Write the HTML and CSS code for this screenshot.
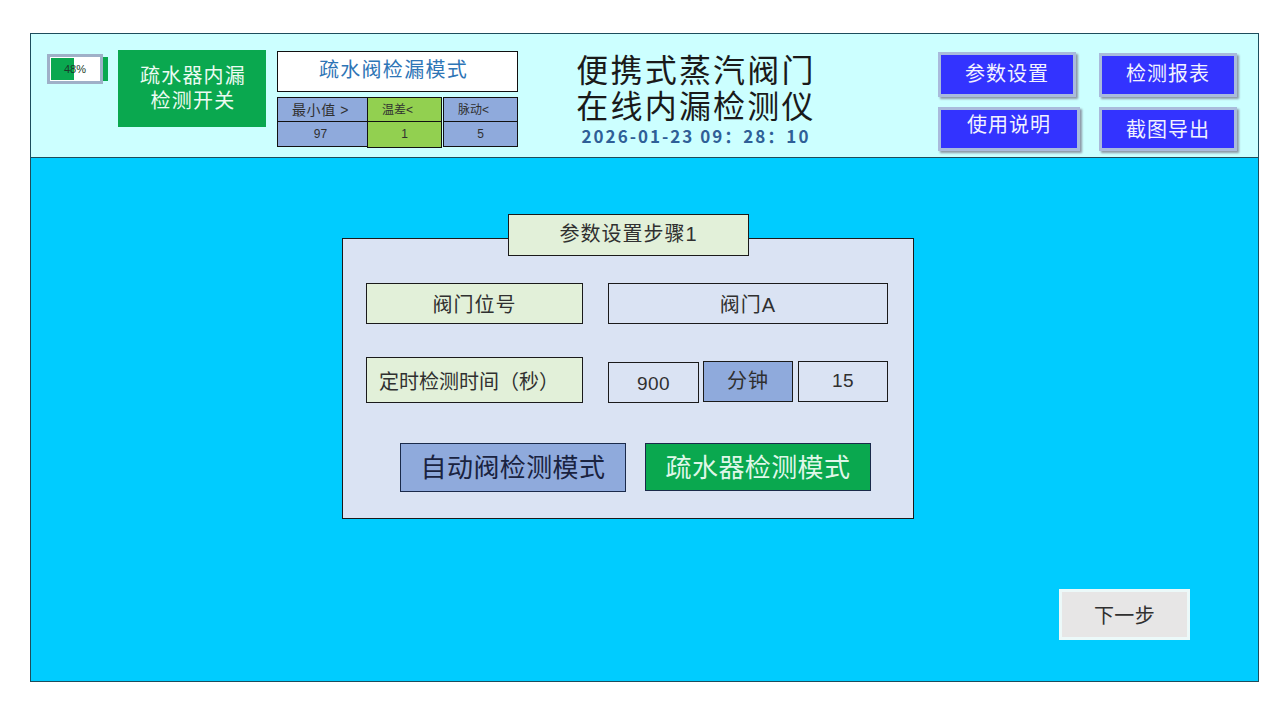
FILE: index.html
```html
<!DOCTYPE html>
<html lang="zh-CN">
<head>
<meta charset="utf-8">
<title>便携式蒸汽阀门在线内漏检测仪</title>
<link rel="stylesheet" href="styles.css">
</head>
<body>
<main class="frame">
  <header class="head">
    <div class="battery">
      <div class="battery-shell">
        <div class="battery-fill" style="width:48%"></div>
        <span class="battery-text">48%</span>
      </div>
      <div class="battery-tip"></div>
    </div>
    <div class="switch">疏水器内漏<br>检测开关</div>
    <div class="mode">
      <div class="mode-name">疏水阀检漏模式</div>
      <div class="limits">
        <div class="limit limit-min"><div class="cell cell-top">最小值 &gt;</div><div class="cell">97</div></div>
        <div class="limit limit-temp"><div class="cell cell-top">温差&lt;</div><div class="cell">1</div></div>
        <div class="limit limit-pulse"><div class="cell cell-top">脉动&lt;</div><div class="cell">5</div></div>
      </div>
    </div>
    <div class="title">
      <h1 class="title-text">便携式蒸汽阀门<br>在线内漏检测仪</h1>
      <div class="clock">2026-01-23 09：28：10</div>
    </div>
    <div class="actions">
      <div class="action action-a">参数设置</div>
      <div class="action action-b">检测报表</div>
      <div class="action action-c">使用说明</div>
      <div class="action action-d">截图导出</div>
    </div>
  </header>
  <section class="content">
    <div class="panel">
      <div class="panel-title">参数设置步骤1</div>
      <div class="row row-one">
        <div class="label">阀门位号</div>
        <div class="value value-wide">阀门A</div>
      </div>
      <div class="row row-two">
        <div class="label label-tall">定时检测时间（秒）</div>
        <div class="timer">
          <div class="value value-sec">900</div>
          <div class="value value-unit">分钟</div>
          <div class="value value-min">15</div>
        </div>
      </div>
      <div class="modes">
        <div class="mode-btn mode-auto">自动阀检测模式</div>
        <div class="mode-btn mode-trap">疏水器检测模式</div>
      </div>
    </div>
    <div class="footer">
      <div class="next">下一步</div>
    </div>
  </section>
</main>
</body>
</html>
```
FILE: styles.css
```css
* { box-sizing: border-box; }
html, body { margin: 0; height: 720px; background: #fff; overflow: hidden; }
body {
  padding: 33px 21px 0 30px;
  font-family: "Liberation Sans", "Noto Sans CJK SC", sans-serif;
  color: #303030;
}
.frame {
  width: 1229px;
  height: 649px;
  border: 1px solid #1d4d5c;
  display: flex;
  flex-direction: column;
}
.head {
  height: 124px;
  flex: none;
  background: #ccffff;
  border-bottom: 1px solid #1d4d5c;
  display: flex;
  align-items: flex-start;
}
.battery { display: flex; align-items: center; margin: 20px 0 0 16px; width: 71px; }
.battery-shell {
  position: relative;
  width: 56px;
  height: 30px;
  border: 3px solid #9fb0c8;
  background: #fff;
  padding: 1px;
}
.battery-fill { height: 100%; background: #0aa84f; }
.battery-text {
  position: absolute;
  inset: 0;
  display: flex;
  align-items: center;
  justify-content: center;
  font-size: 11px;
  color: #1a3a2a;
}
.battery-tip { width: 5px; height: 24px; background: #0aa84f; }
.switch {
  width: 148px;
  height: 77px;
  margin: 16px 0 0 0;
  padding: 14px 0 0 2px;
  background: #0aa84f;
  color: #ecfbf2;
  text-align: center;
  font-size: 20px;
  line-height: 25px;
  letter-spacing: 1.2px;
}
.mode { width: 241px; margin: 17px 0 0 11px; }
.mode-name {
  height: 41px;
  padding-right: 8px;
  background: #fff;
  border: 1px solid #111;
  color: #2e75b6;
  font-size: 20px;
  line-height: 36px;
  text-align: center;
  letter-spacing: 1.3px;
}
.limits { display: flex; margin-top: 5px; align-items: flex-start; }
.limit { font-size: 12px; text-align: center; background: #8faadc; }
.limit-min { width: 90px; }
.limit-temp { width: 75px; background: #92d050; }
.limit-pulse { width: 75px; margin-left: 1px; }
.cell {
  height: 26px;
  margin-top: -1px;
  border: 1px solid #111;
  line-height: 24px;
}
.cell-top { height: 25px; margin-top: 0; line-height: 24px; }
.limit-min .cell-top { font-size: 14px; letter-spacing: 0.6px; padding-right: 4px; white-space: nowrap; }
.limit-temp .cell-top, .limit-pulse .cell-top { padding-right: 14px; }
.limit-min .cell { border-right: none; }
.limit-min .cell:last-child { height: 26px; padding-right: 4px; }
.limit-pulse .cell:last-child { height: 26px; }
.limit-temp .cell:last-child { height: 27px; }
.title { width: 240px; margin: 19px 0 0 58px; text-align: center; }
.title-text {
  margin: 0;
  font-size: 32px;
  font-weight: 400;
  line-height: 36px;
  letter-spacing: 2.2px;
  color: #1a1a1a;
  white-space: nowrap;
}
.clock {
  margin-top: 0;
  font-size: 17px;
  line-height: 22px;
  font-weight: 700;
  letter-spacing: 2px;
  color: #2f5f97;
  font-family: "Noto Sans CJK SC", sans-serif;
  white-space: nowrap;
}
.actions {
  margin: 18px 0 0 122px;
  width: 300px;
  display: grid;
  grid-template-columns: 142px 138px;
  grid-template-rows: 45px 44px;
  column-gap: 19px;
  row-gap: 10px;
}
.action {
  background: #3333ff;
  color: #f2f2ff;
  border: 3px solid #a9bbdc;
  box-shadow: 2px 2px 2px #8d9aa8;
  font-size: 20px;
  letter-spacing: 1px;
  display: flex;
  align-items: center;
  justify-content: center;
}
.action-a { width: 138px; padding-bottom: 4px; }
.action-b { margin-top: 1px; height: 44px; padding-bottom: 6px; }
.action-c { padding-bottom: 12px; }
.action-d { padding-bottom: 1px; }
.content {
  flex: 1;
  background: #00ccff;
  padding: 80px 0 0 311px;
}
.panel {
  position: relative;
  width: 572px;
  height: 281px;
  background: #dae3f3;
  border: 1px solid #1a1a1a;
  padding: 44px 0 0 23px;
}
.panel-title {
  position: absolute;
  left: 165px;
  top: -25px;
  width: 241px;
  height: 42px;
  background: #e2f0d9;
  border: 1px solid #1a1a1a;
  font-size: 20px;
  line-height: 38px;
  text-align: center;
  letter-spacing: 1px;
}
.row { display: flex; align-items: flex-start; }
.row-two { margin-top: 33px; }
.label {
  width: 217px;
  height: 41px;
  background: #e2f0d9;
  border: 1px solid #1a1a1a;
  font-size: 20px;
  line-height: 42px;
  text-align: center;
  letter-spacing: 1px;
}
.label-tall {
  height: 46px;
  line-height: 48px;
  text-align: left;
  padding-left: 12px;
  letter-spacing: 0;
  white-space: nowrap;
}
.value {
  height: 41px;
  border: 1px solid #1a1a1a;
  background: #dae3f3;
  font-size: 20px;
  line-height: 42px;
  text-align: center;
}
.value-wide { width: 280px; margin-left: 25px; letter-spacing: 1px; }
.timer { display: flex; width: 280px; margin: 4px 0 0 25px; align-items: flex-start; }
.value-sec { width: 91px; margin-top: 1px; font-size: 19px; letter-spacing: 0.5px; }
.value-unit { width: 90px; margin-left: 4px; background: #8faadc; letter-spacing: 1px; line-height: 38px; }
.value-min { width: 90px; margin-left: 5px; font-size: 19px; line-height: 38px; letter-spacing: 0.5px; }
.modes { display: flex; margin: 40px 0 0 34px; align-items: flex-start; }
.mode-btn {
  width: 226px;
  height: 49px;
  border: 1px solid #1a2a4a;
  font-size: 26px;
  line-height: 48px;
  text-align: center;
  letter-spacing: 0.4px;
}
.mode-auto { background: #8faadc; color: #1a2340; }
.mode-trap {
  height: 48px;
  margin-left: 19px;
  background: #0aa84f;
  color: #dff7e8;
}
.footer { display: flex; justify-content: flex-end; margin: 70px 68px 0 0; }
.next {
  width: 131px;
  height: 51px;
  background: #e7e6e6;
  border: 3px solid #ecf9f9;
  font-size: 20px;
  line-height: 49px;
  text-align: center;
  letter-spacing: 0.4px;
}
```
